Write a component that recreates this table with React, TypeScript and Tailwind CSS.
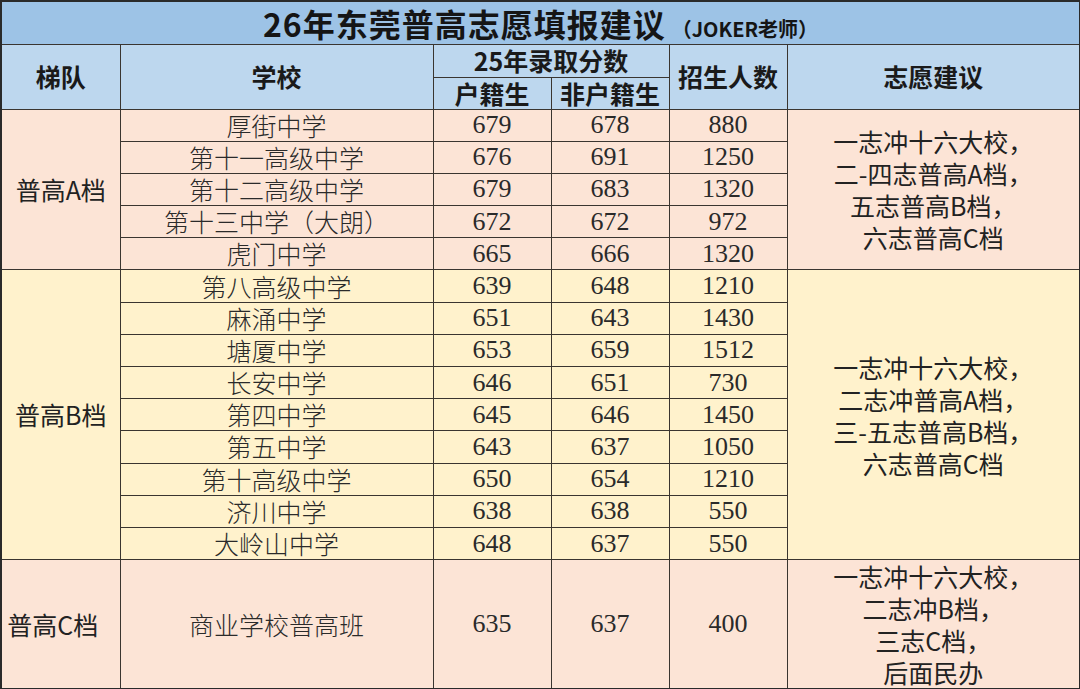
import React from "react";

type Row = { name: string; a: string; b: string; n: string };

const groupA: Row[] = [
  { name: "厚街中学", a: "679", b: "678", n: "880" },
  { name: "第十一高级中学", a: "676", b: "691", n: "1250" },
  { name: "第十二高级中学", a: "679", b: "683", n: "1320" },
  { name: "第十三中学（大朗）", a: "672", b: "672", n: "972" },
  { name: "虎门中学", a: "665", b: "666", n: "1320" },
];

const groupB: Row[] = [
  { name: "第八高级中学", a: "639", b: "648", n: "1210" },
  { name: "麻涌中学", a: "651", b: "643", n: "1430" },
  { name: "塘厦中学", a: "653", b: "659", n: "1512" },
  { name: "长安中学", a: "646", b: "651", n: "730" },
  { name: "第四中学", a: "645", b: "646", n: "1450" },
  { name: "第五中学", a: "643", b: "637", n: "1050" },
  { name: "第十高级中学", a: "650", b: "654", n: "1210" },
  { name: "济川中学", a: "638", b: "638", n: "550" },
  { name: "大岭山中学", a: "648", b: "637", n: "550" },
];

const cell = "border border-[#3a3530] p-0 text-center align-middle";
const head = `${cell} text-[25px] font-bold leading-none text-[#1a1a1a]`;
const num = `${cell} text-[26px] leading-none text-[#2a2a2a] font-['Liberation_Serif','Noto_Sans_CJK_SC',serif]`;
const school = `${cell} text-[25px] font-light leading-none text-[#2a2a2a]`;
const label = `${cell} text-[25px] leading-none text-[#222]`;
const adviceCell = `${cell} text-[25px] leading-[32px] text-[#222]`;

function Advice({ lines }: { lines: string[] }) {
  return (
    <div className="flex flex-col items-center">
      {lines.map((l, k) => (
        <div key={k} className="whitespace-pre">
          {l}
        </div>
      ))}
    </div>
  );
}

function Group({
  name,
  rows,
  advice,
  bg,
}: {
  name: string;
  rows: Row[];
  advice: string[];
  bg: string;
}) {
  return (
    <>
      {rows.map((r, i) => (
        <tr key={r.name} className={`h-[32.2px] ${bg}`}>
          {i === 0 && (
            <td rowSpan={rows.length} className={label}>
              {name}
            </td>
          )}
          <td className={school}>{r.name}</td>
          <td className={num}>{r.a}</td>
          <td className={num}>{r.b}</td>
          <td className={num}>{r.n}</td>
          {i === 0 && (
            <td rowSpan={rows.length} className={adviceCell}>
              <Advice lines={advice} />
            </td>
          )}
        </tr>
      ))}
    </>
  );
}

export default function App() {
  return (
    <div className="w-[1080px] h-[689px] overflow-hidden bg-white font-['Noto_Sans_CJK_SC','Noto_Sans',sans-serif]">
      <table className="table-fixed border-collapse w-[1079px] border-2 border-[#2a2a2a]">
        <colgroup>
          <col className="w-[119px]" />
          <col className="w-[313px]" />
          <col className="w-[118px]" />
          <col className="w-[118px]" />
          <col className="w-[118px]" />
          <col className="w-[293px]" />
        </colgroup>
        <tbody>
          <tr className="h-[43px] bg-[#9dc3e6]">
            <td colSpan={6} className={`${cell} border-[#1e2a38]`}>
              <div className="flex h-[41px] items-center justify-center overflow-visible">
                <span className="leading-none text-[#151515] font-bold">
                  <span className="text-[32px] tracking-[1px]">26年东莞普高志愿填报建议</span>
                  <span className="pl-[6px] text-[20px]">（JOKER老师）</span>
                </span>
              </div>
            </td>
          </tr>
          <tr className="h-[33px] bg-[#bdd7ee]">
            <td rowSpan={2} className={head}>
              梯队
            </td>
            <td rowSpan={2} className={head}>
              学校
            </td>
            <td colSpan={2} className={head}>
              25年录取分数
            </td>
            <td rowSpan={2} className={head}>
              招生人数
            </td>
            <td rowSpan={2} className={head}>
              志愿建议
            </td>
          </tr>
          <tr className="h-[32px] bg-[#bdd7ee]">
            <td className={head}>户籍生</td>
            <td className={head}>非户籍生</td>
          </tr>
          <Group
            name="普高A档"
            rows={groupA}
            bg="bg-[#fce4d6]"
            advice={["一志冲十六大校，", "二-四志普高A档，", "五志普高B档，", "六志普高C档"]}
          />
          <Group
            name="普高B档"
            rows={groupB}
            bg="bg-[#fff2cc]"
            advice={["一志冲十六大校，", "二志冲普高A档，", "三-五志普高B档，", "六志普高C档"]}
          />
          <tr className="h-[129px] bg-[#fce4d6]">
            <td className={`${label} pr-4`}>普高C档</td>
            <td className={school}>商业学校普高班</td>
            <td className={num}>635</td>
            <td className={num}>637</td>
            <td className={num}>400</td>
            <td className={adviceCell}>
              <Advice lines={["一志冲十六大校，", "二志冲B档，", "三志C档，", "后面民办"]} />
            </td>
          </tr>
        </tbody>
      </table>
    </div>
  );
}
